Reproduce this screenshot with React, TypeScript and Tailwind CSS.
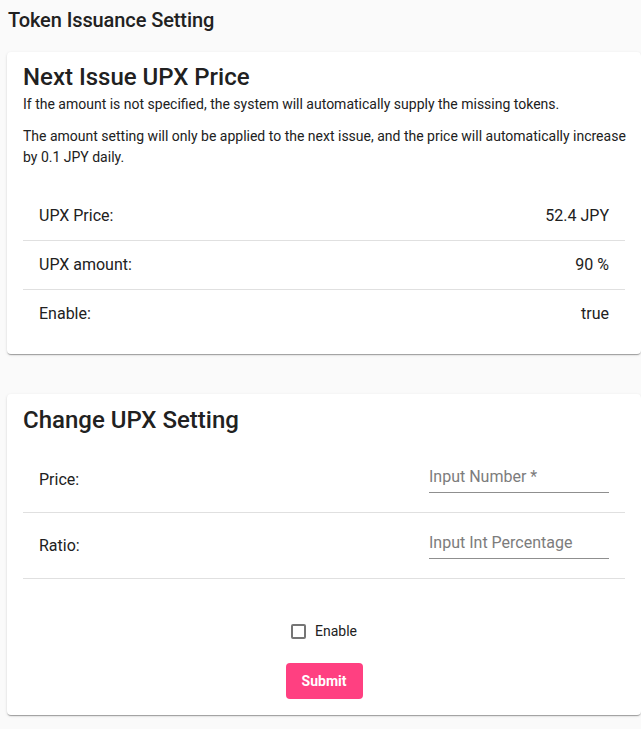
import { useState } from "react";

const cardShadow =
  "shadow-[0px_2px_1px_-1px_rgba(0,0,0,0.2),0px_1px_1px_0px_rgba(0,0,0,0.14),0px_1px_3px_0px_rgba(0,0,0,0.12)]";

const issueRows = [
  { label: "UPX Price:", value: "52.4 JPY" },
  { label: "UPX amount:", value: "90 %" },
  { label: "Enable:", value: "true" },
];

export default function App() {
  const [price, setPrice] = useState("");
  const [ratio, setRatio] = useState("");
  const [enabled, setEnabled] = useState(false);

  return (
    <div
      className="min-h-screen bg-[#fafafa] text-[#212121]"
      style={{ fontFamily: "Roboto, 'Noto Sans', sans-serif" }}
    >
      {/* Page title */}
      <h1 className="pl-2 pt-[4px] text-[20px] leading-[32px] font-medium tracking-[-0.1px]">
        Token Issuance Setting
      </h1>

      {/* Current issue info */}
      <section className={`ml-[7px] mt-[16px] rounded bg-white px-4 pt-[9px] pb-4 ${cardShadow}`}>
        <h2 className="text-[24px] leading-[32px] font-medium">Next Issue UPX Price</h2>
        <p className="mt-px text-[14px] leading-[20px]">
          If the amount is not specified, the system will automatically supply the missing tokens.
        </p>
        <p className="-mr-2 mt-3 text-[14px] leading-[21px]">
          The amount setting will only be applied to the next issue, and the price will automatically increase
          by 0.1 JPY daily.
        </p>

        <div className="mt-[24px]">
          {issueRows.map((row, i) => (
            <div
              key={row.label}
              className={`flex items-center justify-between px-4 py-3 text-[16px] leading-6 ${
                i < issueRows.length - 1 ? "border-b border-[#e0e0e0]" : ""
              }`}
            >
              <span>{row.label}</span>
              <span>{row.value}</span>
            </div>
          ))}
        </div>
      </section>

      {/* Change settings form */}
      <section className={`ml-[7px] mt-10 rounded bg-white px-4 pt-[10px] pb-4 ${cardShadow}`}>
        <h2 className="text-[24px] leading-[32px] font-medium">Change UPX Setting</h2>

        <div className="mt-[11px]">
          <div className="flex h-[66px] items-center justify-between border-b border-[#e0e0e0] px-4 text-[16px]">
            <span>Price:</span>
            <input
              value={price}
              onChange={(e) => setPrice(e.target.value)}
              placeholder="Input Number *"
              className="mb-[5px] h-8 w-[180px] border-b border-[#8f8f8f] bg-transparent text-[16px] outline-none placeholder:text-[#7c7c7c]"
            />
          </div>
          <div className="flex h-[66px] items-center justify-between border-b border-[#e0e0e0] px-4 text-[16px]">
            <span>Ratio:</span>
            <input
              value={ratio}
              onChange={(e) => setRatio(e.target.value)}
              placeholder="Input Int Percentage"
              className="mb-[5px] h-8 w-[180px] border-b border-[#8f8f8f] bg-transparent text-[16px] outline-none placeholder:text-[#7c7c7c]"
            />
          </div>
        </div>

        <div className="mt-[31px] flex h-[42px] items-center justify-center">
          <label className="flex cursor-pointer items-center gap-[9px] text-[14px]">
            <span
              onClick={() => setEnabled(!enabled)}
              className={`h-[15px] w-[15px] rounded-[2px] border-2 ${
                enabled ? "border-[#ff4081] bg-[#ff4081]" : "border-[#757575]"
              }`}
            />
            Enable
          </label>
        </div>

        <div className="mt-[11px] flex justify-center">
          <button className="h-9 w-[77px] rounded bg-[#ff4081] text-[14px] font-bold text-white">
            Submit
          </button>
        </div>
      </section>
    </div>
  );
}
